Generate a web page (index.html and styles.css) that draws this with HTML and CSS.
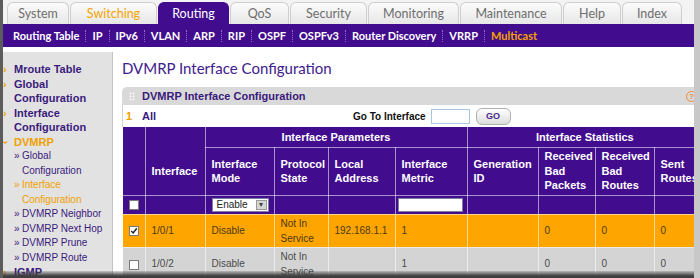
FILE: index.html
```html
<!DOCTYPE html>
<html lang="en">
<head>
    <meta charset="UTF-8">
    <meta name="viewport" content="width=device-width, initial-scale=1.0">
    <title>DVMRP Interface Configuration</title>
    <link rel="stylesheet" href="styles.css">
</head>
<body>
<div class="screen">
    <div class="tabs">
        <div class="tab">System</div>
        <div class="tab hot">Switching</div>
        <div class="tab on">Routing</div>
        <div class="tab">QoS</div>
        <div class="tab">Security</div>
        <div class="tab">Monitoring</div>
        <div class="tab">Maintenance</div>
        <div class="tab">Help</div>
        <div class="tab">Index</div>
    </div>
    <div class="subnav">
        <span>Routing Table</span><i class="sep"></i>
        <span>IP</span><i class="sep"></i>
        <span>IPv6</span><i class="sep"></i>
        <span>VLAN</span><i class="sep"></i>
        <span>ARP</span><i class="sep"></i>
        <span>RIP</span><i class="sep"></i>
        <span>OSPF</span><i class="sep"></i>
        <span>OSPFv3</span><i class="sep"></i>
        <span>Router Discovery</span><i class="sep"></i>
        <span>VRRP</span><i class="sep"></i>
        <span class="hot">Multicast</span>
    </div>
    <div class="content">
        <div class="sidebar">
            <div class="nav-item"><span class="mark">›</span><span>Mroute Table</span></div>
            <div class="nav-item"><span class="mark">›</span><span>Global Configuration</span></div>
            <div class="nav-item"><span class="mark">›</span><span>Interface Configuration</span></div>
            <div class="nav-item active"><span class="mark down">›</span><span>DVMRP</span></div>
            <div class="nav-item sub"><span class="mark">»</span><span>Global Configuration</span></div>
            <div class="nav-item sub active"><span class="mark">»</span><span>Interface Configuration</span></div>
            <div class="nav-item sub"><span class="mark">»</span><span>DVMRP Neighbor</span></div>
            <div class="nav-item sub"><span class="mark">»</span><span>DVMRP Next Hop</span></div>
            <div class="nav-item sub"><span class="mark">»</span><span>DVMRP Prune</span></div>
            <div class="nav-item sub"><span class="mark">»</span><span>DVMRP Route</span></div>
            <div class="nav-item"><span class="mark">›</span><span>IGMP</span></div>
        </div>
        <div class="main">
            <h1 class="title">DVMRP Interface Configuration</h1>
            <div class="panel">
                <div class="panel-head">
                    <span class="grip"></span>
                    <span>DVMRP Interface Configuration</span>
                    <span class="help">?</span>
                </div>
                <div class="toolbar">
                    <span class="count">1</span>
                    <span class="all">All</span>
                    <span class="goto">Go To Interface</span>
                    <span class="goto-input"></span>
                    <span class="go-btn">GO</span>
                </div>
                <table class="grid">
                    <colgroup>
                        <col style="width:22px"><col style="width:60px"><col style="width:69px">
                        <col style="width:54px"><col style="width:67px"><col style="width:72px">
                        <col style="width:71px"><col style="width:57px"><col style="width:59px">
                        <col style="width:48px">
                    </colgroup>
                    <tr class="group">
                        <th rowspan="2"></th>
                        <th rowspan="2" class="low">Interface</th>
                        <th colspan="4">Interface Parameters</th>
                        <th colspan="4">Interface Statistics</th>
                    </tr>
                    <tr class="labels">
                        <th>Interface Mode</th>
                        <th>Protocol State</th>
                        <th>Local Address</th>
                        <th>Interface Metric</th>
                        <th>Generation ID</th>
                        <th>Received Bad Packets</th>
                        <th>Received Bad Routes</th>
                        <th>Sent Routes</th>
                    </tr>
                    <tr class="filter">
                        <td class="check"><span class="box"></span></td>
                        <td></td>
                        <td><span class="select">Enable<b>▾</b></span></td>
                        <td></td>
                        <td></td>
                        <td class="tight"><span class="field"></span></td>
                        <td></td><td></td><td></td><td></td>
                    </tr>
                    <tr class="row sel">
                        <td class="check"><span class="box"><svg viewBox="0 0 10 10" width="8" height="8"><polyline points="1.5,5 4,7.5 8.5,1.5" fill="none" stroke="#222" stroke-width="1.8"/></svg></span></td>
                        <td>1/0/1</td>
                        <td>Disable</td>
                        <td>Not In Service</td>
                        <td>192.168.1.1</td>
                        <td>1</td>
                        <td></td>
                        <td>0</td>
                        <td>0</td>
                        <td>0</td>
                    </tr>
                    <tr class="row">
                        <td class="check"><span class="box"></span></td>
                        <td>1/0/2</td>
                        <td>Disable</td>
                        <td>Not In Service</td>
                        <td></td>
                        <td>1</td>
                        <td></td>
                        <td>0</td>
                        <td>0</td>
                        <td>0</td>
                    </tr>
                </table>
            </div>
        </div>
    </div>
</div>
</body>
</html>
```

FILE: styles.css
```css
* { margin: 0; padding: 0; box-sizing: border-box; }
body { width: 700px; height: 278px; overflow: hidden; background: #fff; font-family: "Liberation Sans", Arial, sans-serif; }
.screen { position: relative; width: 700px; height: 278px; overflow: hidden; border-left: 3px solid #5c5c5c; border-right: 6px solid #c8c8c8; background: #fff; }
.screen::after { content: ""; position: absolute; left: 0; right: 0; bottom: 0; height: 7px; background: linear-gradient(rgba(70, 70, 70, 0.2), #3e3e3e 70%); }

.tabs { display: flex; align-items: flex-end; height: 24px; padding-left: 4px; background: #f3f3f3; font-family: Lato, sans-serif; }
.tab { flex: none; height: 22px; margin-right: 1px; border: 1px solid #cfcfcf; border-bottom: none; border-radius: 6px 6px 0 0; background: linear-gradient(#fbfbfb, #e7e7e7); color: #6e6e6e; font-size: 12.5px; line-height: 21px; text-align: center; }
/* tab widths follow the original menu */
.tab:nth-child(1) { width: 62px; }
.tab:nth-child(2) { width: 87px; }
.tab:nth-child(3) { width: 71px; }
.tab:nth-child(4) { width: 59px; }
.tab:nth-child(5) { width: 77px; }
.tab:nth-child(6) { width: 91px; }
.tab:nth-child(7) { width: 102px; }
.tab:nth-child(8) { width: 58px; }
.tab:nth-child(9) { width: 60px; }
.tab.hot { color: #f4a300; }
.tab.on { background: #420c8e; border-color: #420c8e; color: #fff; }

.subnav { display: flex; align-items: center; height: 23px; padding-left: 10px; background: #420c8e; color: #fff; font-family: Lato, sans-serif; font-weight: bold; font-size: 11px; }
.subnav .sep { height: 12px; margin: 0 6px; border-left: 1px dotted #8a70c6; }
.subnav .hot { color: #f4a300; }

.content { display: flex; height: 231px; }
.sidebar { flex: none; width: 110px; margin-top: 5px; padding-top: 10px; background: #e2e2e2; border-right: 1px solid #c4c4c4; }
.nav-item { display: flex; line-height: 14.5px; color: #3a1a7c; font-weight: bold; font-size: 11px; }
.nav-item .mark { flex: none; width: 11px; color: #f0a000; font-size: 11px; }
.nav-item .mark.down { display: inline-block; transform: rotate(90deg); width: 6px; margin-right: 5px; text-align: center; }
.nav-item.sub { padding-left: 11px; font-weight: normal; font-size: 10px; }
.nav-item.sub .mark { width: 8px; color: #3a1a7c; font-size: 10px; }
.nav-item.active, .nav-item.active .mark { color: #f0a000; }

.main { flex: 1; min-width: 0; padding: 12px 0 0 9px; }
.title { font-family: Lato, sans-serif; font-weight: normal; font-size: 15px; line-height: 18px; color: #40208c; margin-bottom: 10px; }

.panel { width: 580px; }
.panel-head { display: flex; align-items: center; height: 18px; padding-left: 7px; background: #d9d9d9; border-radius: 5px 5px 0 0; color: #3a1a7c; font-weight: bold; font-size: 11px; }
.grip { width: 6px; height: 9px; margin-right: 7px; background: radial-gradient(circle, #f2f2f2 0.9px, transparent 1.2px) 0 0 / 3px 3px; }
.help { margin-left: auto; margin-right: 5px; width: 11px; height: 11px; border: 1px solid #f08a3c; border-radius: 50%; color: #f08a3c; font-size: 8px; line-height: 9px; text-align: center; }

.toolbar { display: flex; align-items: center; height: 22px; border-left: 1px solid #d2d2d2; font-weight: bold; font-size: 11px; }
.toolbar .count { width: 19px; padding-left: 3px; color: #f0a000; }
.toolbar .all { width: 211px; color: #3a1a7c; }
.toolbar .goto { font-size: 10px; color: #111; }
.goto-input { width: 39px; height: 15px; margin-left: 5px; border: 1px solid #a9c8e4; background: #fff; }
.go-btn { width: 35px; height: 17px; margin-left: 6px; border: 1px solid #b0b0b0; border-radius: 6px; background: linear-gradient(#ffffff, #dcdcdc); color: #4a2a8c; font-size: 9px; line-height: 15px; text-align: center; }

.grid { border-collapse: collapse; border-style: hidden; table-layout: fixed; width: 579px; margin-left: 1px; }
.grid th, .grid td { padding: 0 6px; border: 1px solid rgba(255, 255, 255, 0.55); text-align: left; vertical-align: middle; }
.grid th { background: #420c8e; color: #fff; font-weight: bold; font-size: 11px; line-height: 14.4px; }
.grid .group th { height: 20px; text-align: center; }
.grid .group th.low { padding-top: 20px; text-align: left; }
.grid .labels th { height: 48px; }
.grid .filter td { height: 18px; background: #420c8e; }
.grid .row td { height: 33px; background: #d4d4d4; color: #4a4a4a; font-size: 10px; line-height: 15px; }
.grid .row.sel td { background: #ffa500; color: #4a3a1a; }
.grid td.check { padding: 0; text-align: center; }
.grid td.tight { padding: 0 2px; }

.box { display: inline-flex; align-items: center; justify-content: center; width: 10px; height: 10px; vertical-align: middle; background: #fff; border: 1px solid #7a7a7a; }
.select { display: flex; align-items: center; width: 57px; height: 14px; padding-left: 4px; background: #fff; border: 1px solid #8080a0; color: #222; font-size: 10px; }
.select b { margin-left: auto; width: 11px; height: 10px; margin-right: 1px; background: #d6d6d6; border: 1px solid #999; color: #444; font-size: 8px; line-height: 8px; text-align: center; font-weight: normal; }
.field { display: block; width: 65px; height: 14px; background: #fff; border: 1px solid #8080a0; }
```
